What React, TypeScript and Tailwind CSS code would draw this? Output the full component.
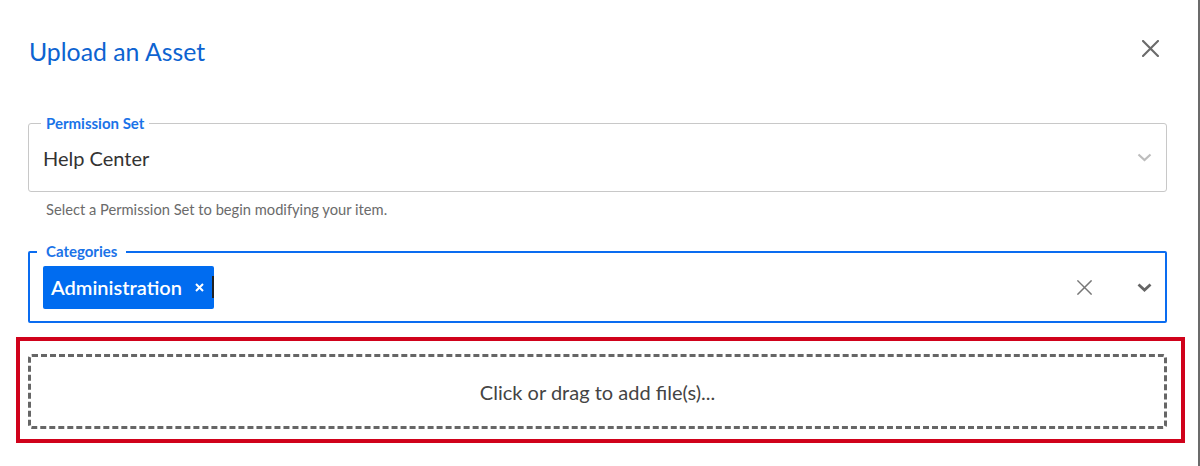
import React from "react";

function CloseIcon({ className, size = 16, stroke = 2 }: { className?: string; size?: number; stroke?: number }) {
  return (
    <svg width={size} height={size} viewBox="0 0 16 16" className={className} fill="none">
      <path d="M1 1 L15 15 M15 1 L1 15" stroke="currentColor" strokeWidth={stroke} strokeLinecap="square" />
    </svg>
  );
}

function Chevron({ className, stroke = 2 }: { className?: string; stroke?: number }) {
  return (
    <svg width="15" height="9" viewBox="0 0 15 9" className={className} fill="none">
      <path d="M1.5 1.5 L7.5 7 L13.5 1.5" stroke="currentColor" strokeWidth={stroke} />
    </svg>
  );
}

export default function App() {
  return (
    <div
      className="h-[466px] w-full border-r-2 border-[#6b6b6b] bg-white pl-[28px] pr-[31px]"
      style={{ fontFamily: "Lato, 'Open Sans', sans-serif" }}
    >
      {/* header */}
      <div className="flex items-start justify-between pt-[36px]">
        <h1 className="ml-[1px] text-[24.8px] leading-[32px] font-normal text-[#0d63d1]">Upload an Asset</h1>
        <button className="mt-[4px] mr-[8px] text-[#6b6b6b]">
          <CloseIcon size={17} />
        </button>
      </div>

      {/* permission set */}
      <div className="relative mt-[55px] flex h-[69px] items-center justify-between rounded-[3px] border border-[#c8c8c8] pl-[14px] pr-[14px]">
        <span className="absolute -top-[10px] left-[12px] bg-white px-[5px] text-[15px] leading-[18px] font-bold text-[#1a73e8]">
          Permission Set
        </span>
        <span className="text-[20px] text-[#333]">Help Center</span>
        <Chevron className="text-[#bdbdbd]" stroke={2.2} />
      </div>
      <p className="mt-[8px] pl-[18px] text-[14.7px] leading-[18px] text-[#6b6b6b]">
        Select a Permission Set to begin modifying your item.
      </p>

      {/* categories */}
      <div className="relative mt-[33px] flex h-[72px] items-center rounded-[2px] border-2 border-[#0a6cf0] pl-[13px] pr-[13px]">
        <span className="absolute -top-[11px] left-[7px] bg-white px-[9px] text-[15px] leading-[18px] font-bold text-[#1a73e8]">
          Categories
        </span>
        <div className="flex h-[43px] items-center rounded-[2px] bg-[#006cf0] pl-[8px] pr-[10px] text-white">
          <span className="text-[20px] font-semibold leading-none">Administration</span>
          <svg width="9" height="9" viewBox="0 0 9 9" className="ml-[13px]" fill="none">
            <path d="M1 1 L8 8 M8 1 L1 8" stroke="white" strokeWidth="2" />
          </svg>
        </div>
        <span className="-ml-[2px] h-[22px] w-[2px] bg-[#222]" />
        <div className="ml-auto flex items-center gap-[45px]">
          <CloseIcon size={15} stroke={1.6} className="text-[#777]" />
          <Chevron className="text-[#666]" stroke={2.8} />
        </div>
      </div>

      {/* upload drop zone (highlighted) */}
      <div className="-mr-[18px] mt-[14px] -ml-[12px] border-4 border-[#d0021b] pt-[13px] pr-[14px] pb-[10px] pl-[8px]">
        <div className="flex h-[75px] items-center justify-center rounded-[4px] border-[3px] border-dashed border-[#666]">
          <span className="text-[20px] text-[#444]">Click or drag to add file(s)...</span>
        </div>
      </div>
    </div>
  );
}
